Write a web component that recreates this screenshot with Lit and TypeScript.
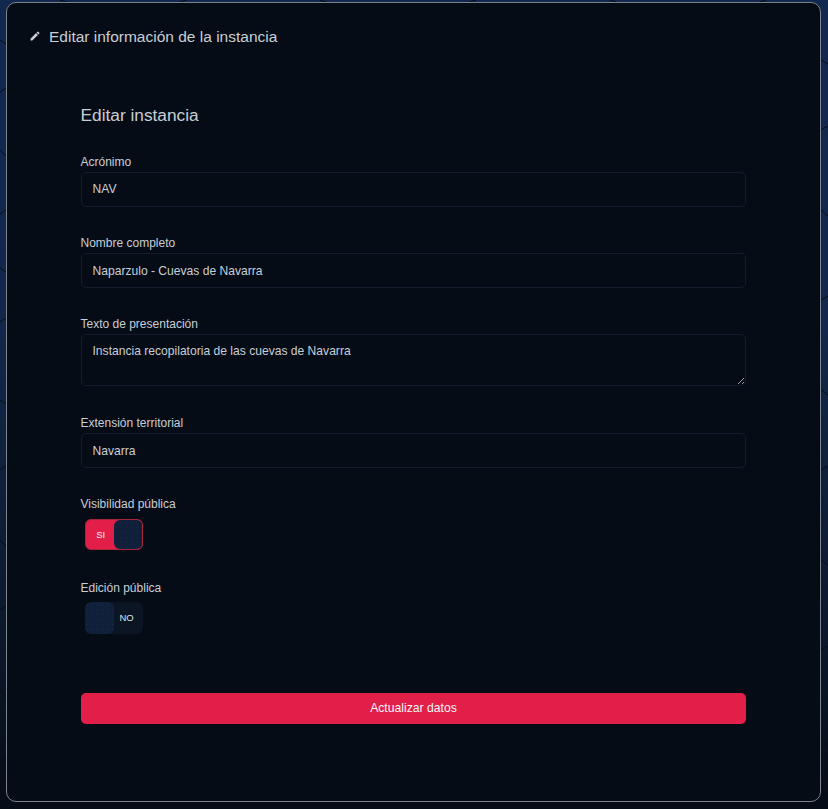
import { LitElement, html, css, svg } from "lit";
import { customElement } from "lit/decorators.js";

const edgeLines = [
  "M0 40 L6 44", "M0 92 L6 88", "M0 150 L6 156", "M0 214 L6 210", "M0 268 L6 272", "M0 322 L6 318",
  "M0 400 L6 404", "M0 470 L6 466", "M0 540 L6 546", "M0 610 L6 606", "M0 690 L6 696", "M0 760 L6 756",
  "M821 60 L828 64", "M821 130 L828 126", "M821 210 L828 216", "M821 300 L828 296", "M821 390 L828 395",
  "M821 470 L828 466", "M821 560 L828 565", "M821 650 L828 646", "M821 740 L828 746",
  "M60 0 L66 2", "M180 2 L186 0", "M320 0 L326 2", "M470 2 L476 0", "M610 0 L616 2", "M760 2 L766 0",
  "M90 802 L96 809", "M220 809 L226 802", "M390 802 L396 809", "M540 809 L546 802", "M700 802 L706 809",
];

@customElement("app-root")
export class AppRoot extends LitElement {
  static styles = css`
    :host {
      display: block;
      position: relative;
      width: 828px;
      height: 809px;
      overflow: hidden;
      box-sizing: border-box;
      padding: 2px 7px 7px 6px;
      background: linear-gradient(180deg, #12284f 0%, #12274a 40%, #0f1d36 65%, #0a1424 85%, #060c16 100%);
      font-family: "Liberation Sans", Arial, sans-serif;
      color: #c9ced5;
    }
    * { box-sizing: border-box; }
    .lines {
      position: absolute;
      inset: 0;
      width: 828px;
      height: 809px;
      pointer-events: none;
    }
    .panel {
      position: relative;
      height: 800px;
      background: #060c16;
      border: 1px solid #7d828c;
      border-radius: 10px;
      padding: 24px 22px 0;
    }
    .head {
      display: flex;
      align-items: center;
      gap: 8px;
      height: 18px;
      font-size: 15.5px;
      line-height: 17px;
    }
    .head svg { width: 12px; height: 12px; fill: #c9ced5; flex: none; }
    .form {
      margin: 0 52px;
      padding-top: 59px;
      display: flex;
      flex-direction: column;
    }
    h2 {
      margin: 0 0 28px -0.5px;
      font-size: 17.3px;
      line-height: 22px;
      font-weight: 400;
      color: #c9ced5;
    }
    .field { display: flex; flex-direction: column; }
    label {
      font-size: 12px;
      line-height: 14px;
      padding-top: 1px;
      margin: 0 0 3px -0.5px;
      color: #c9ced5;
    }
    input, textarea {
      display: block;
      width: 100%;
      background: #060c16;
      border: 1px solid #121c2c;
      border-radius: 5px;
      color: #c9ced5;
      font: 12.1px/16px "Liberation Sans", Arial, sans-serif;
      padding: 8px 10.5px;
      outline: none;
      margin: 0;
    }
    input { height: 35px; margin-bottom: 28px; }
    .first input { padding-bottom: 9px; }
    textarea { height: 52px; margin-bottom: 29px; resize: vertical; }
    .toggle {
      display: flex;
      width: 58px;
      height: 32px;
      margin: 0 0 0 4px;
      border-radius: 6px;
      overflow: hidden;
      font-size: 9.5px;
      color: #f2f4f7;
    }
    .toggle span { display: flex; align-items: center; justify-content: center; width: 29px; }
    .knob {
      background-color: #10203a;
      background-image: radial-gradient(#1a2b47 0.6px, transparent 0.8px);
      background-size: 5px 5px;
    }
    .on { height: 31px; background: #e11f48; border: 1px solid #a8263c; }
    .on .txt { width: 28px; margin-left: 1px; }
    .on .knob { border-radius: 6px; width: 30px; margin-right: -1px; margin-left: -1px; }
    .off { background: #0b1524; color: #dfe3e8; }
    .off .knob { border-radius: 6px; }
    .off .txt { margin-left: -2px; padding-bottom: 1px; }
    .tfield { margin-bottom: 30px; }
    .tfield label { margin-bottom: 8px; }
    .tfield.pub label { margin-bottom: 7px; }
    .tfield.pub { margin-bottom: 59px; }
    button {
      height: 31px;
      width: 100%;
      border: 0;
      border-radius: 5px;
      background: #e11f48;
      color: #f4f5f7;
      font: 12.2px "Liberation Sans", Arial, sans-serif;
      padding: 0 0 1px;
    }
  `;

  render() {
    return html`
      <svg class="lines" viewBox="0 0 828 809" aria-hidden="true">
        ${edgeLines.map((d) => svg`<path d=${d} stroke="#060c16" stroke-width="1" fill="none"></path>`)}
      </svg>
      <section class="panel">
        <div class="head">
          <svg viewBox="0 0 24 24" aria-hidden="true">
            <path d="M3 17.25V21h3.75L17.81 9.94l-3.75-3.75L3 17.25zM20.71 7.04a1 1 0 0 0 0-1.41l-2.34-2.34a1 1 0 0 0-1.41 0l-1.83 1.83 3.75 3.75 1.83-1.83z"></path>
          </svg>
          <span>Editar información de la instancia</span>
        </div>
        <div class="form">
          <h2>Editar instancia</h2>
          <div class="field first">
            <label>Acrónimo</label>
            <input .value=${"NAV"} />
          </div>
          <div class="field">
            <label>Nombre completo</label>
            <input .value=${"Naparzulo - Cuevas de Navarra"} />
          </div>
          <div class="field">
            <label>Texto de presentación</label>
            <textarea .value=${"Instancia recopilatoria de las cuevas de Navarra"}></textarea>
          </div>
          <div class="field">
            <label>Extensión territorial</label>
            <input .value=${"Navarra"} />
          </div>
          <div class="field tfield">
            <label>Visibilidad pública</label>
            <div class="toggle on"><span class="txt">SI</span><span class="knob"></span></div>
          </div>
          <div class="field tfield pub">
            <label>Edición pública</label>
            <div class="toggle off"><span class="knob"></span><span class="txt">NO</span></div>
          </div>
          <button>Actualizar datos</button>
        </div>
      </section>
    `;
  }
}
